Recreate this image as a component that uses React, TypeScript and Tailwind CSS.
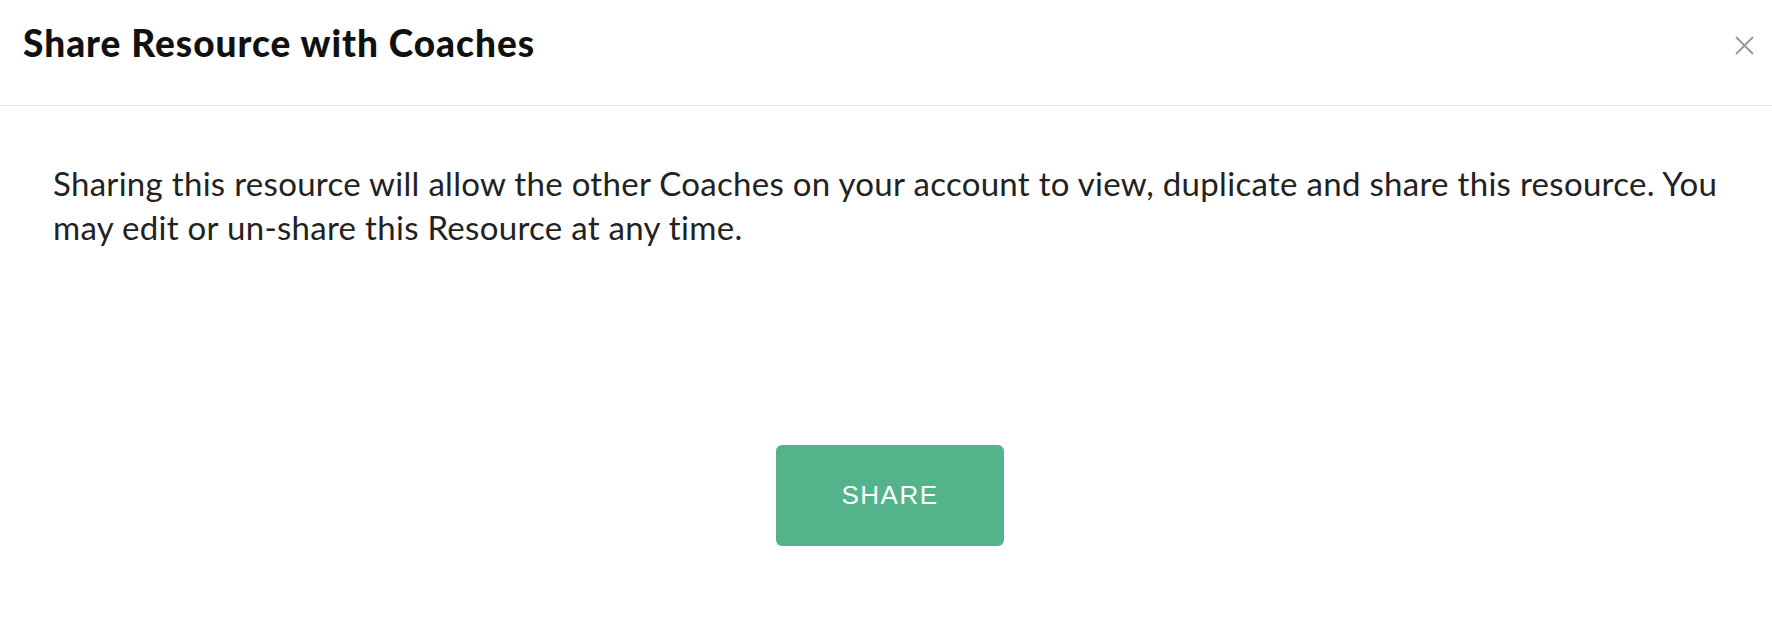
export default function App() {
  return (
    <main className="min-h-screen w-full bg-white font-['Lato','Noto_Sans',sans-serif]">
      <header className="flex h-[106px] items-start justify-between border-b border-[#e5e5e5] pl-[23px] pr-[18px] pt-[24px]">
        <h1 className="text-[37px] font-black leading-none tracking-[1px] text-[#111111]">Share Resource with Coaches</h1>
        <button type="button" aria-label="Close" className="mt-[12px] text-[#9a9a9a]">
          <svg width="19" height="19" viewBox="0 0 19 19" fill="none" stroke="currentColor" strokeWidth="2">
            <path d="M1 1 L18 18 M18 1 L1 18" />
          </svg>
        </button>
      </header>

      <section className="px-[53px] pt-[55px]">
        <p className="text-[33px] leading-[44px] tracking-[0.3px] text-[#222222]">
          Sharing this resource will allow the other Coaches on your account to view, duplicate and share this resource. You
          may edit or un-share this Resource at any time.
        </p>
        <div className="mt-[196px] flex justify-center">
          <button
            type="button"
            className="ml-[8px] grid h-[101px] w-[228px] place-items-center rounded-[6px] bg-[#55b38c] font-['Liberation_Sans',Arial,sans-serif] text-[26px] tracking-[1.5px] text-white"
          >
            SHARE
          </button>
        </div>
      </section>
    </main>
  );
}
